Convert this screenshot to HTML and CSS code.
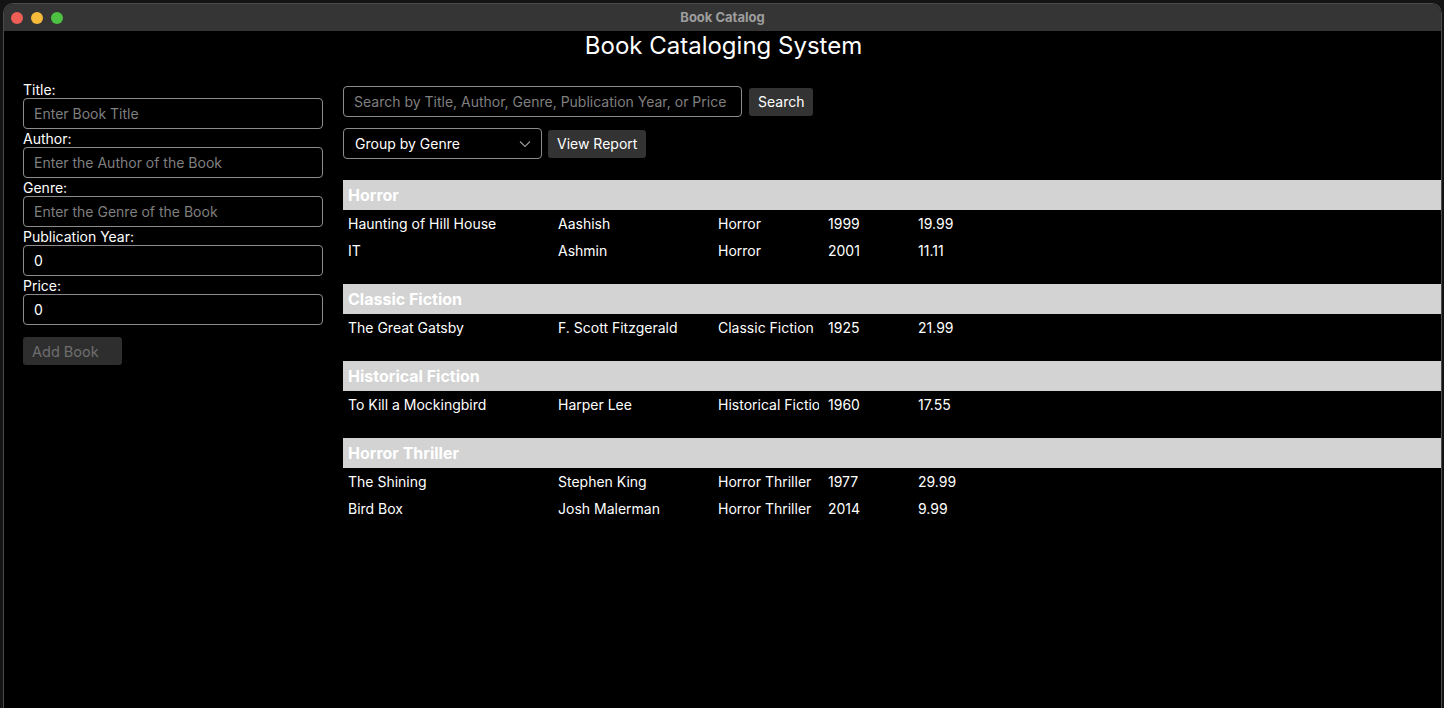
FILE: index.html
```html
<!DOCTYPE html>
<html lang="en">
<head>
<meta charset="utf-8">
<title>Book Catalog</title>
<link rel="stylesheet" href="styles.css">
</head>
<body>
<div class="window">
  <div class="titlebar">
    <div class="lights">
      <span class="light red"></span>
      <span class="light yellow"></span>
      <span class="light green"></span>
    </div>
    <div class="wintitle">Book Catalog</div>
  </div>
  <div class="content">
    <h1 class="apptitle">Book Cataloging System</h1>
    <div class="main">
      <div class="form">
        <label class="lbl">Title:</label>
        <input class="field" type="text" placeholder="Enter Book Title">
        <label class="lbl">Author:</label>
        <input class="field" type="text" placeholder="Enter the Author of the Book">
        <label class="lbl">Genre:</label>
        <input class="field" type="text" placeholder="Enter the Genre of the Book">
        <label class="lbl">Publication Year:</label>
        <input class="field" type="text" value="0">
        <label class="lbl">Price:</label>
        <input class="field" type="text" value="0">
        <button class="btn disabled" type="button">Add Book</button>
      </div>
      <div class="catalog">
        <div class="toolbar">
          <input class="search" type="text" placeholder="Search by Title, Author, Genre, Publication Year, or Price">
          <button class="btn" type="button">Search</button>
        </div>
        <div class="toolbar second">
          <div class="select">
            <span>Group by Genre</span>
            <svg class="chev" width="12" height="8" viewBox="0 0 12 8"><path d="M1 1.5 L6 6.5 L11 1.5" fill="none" stroke="#9a9a9a" stroke-width="1.1"/></svg>
          </div>
          <button class="btn" type="button">View Report</button>
        </div>
        <div class="groups">
          <section class="group">
            <div class="ghead">Horror</div>
            <div class="row"><span class="c1">Haunting of Hill House</span><span class="c2">Aashish</span><span class="c3">Horror</span><span class="c4">1999</span><span class="c5">19.99</span></div>
            <div class="row"><span class="c1">IT</span><span class="c2">Ashmin</span><span class="c3">Horror</span><span class="c4">2001</span><span class="c5">11.11</span></div>
          </section>
          <section class="group">
            <div class="ghead">Classic Fiction</div>
            <div class="row"><span class="c1">The Great Gatsby</span><span class="c2">F. Scott Fitzgerald</span><span class="c3">Classic Fiction</span><span class="c4">1925</span><span class="c5">21.99</span></div>
          </section>
          <section class="group">
            <div class="ghead">Historical Fiction</div>
            <div class="row"><span class="c1">To Kill a Mockingbird</span><span class="c2">Harper Lee</span><span class="c3">Historical Fiction</span><span class="c4">1960</span><span class="c5">17.55</span></div>
          </section>
          <section class="group">
            <div class="ghead">Horror Thriller</div>
            <div class="row"><span class="c1">The Shining</span><span class="c2">Stephen King</span><span class="c3">Horror Thriller</span><span class="c4">1977</span><span class="c5">29.99</span></div>
            <div class="row"><span class="c1">Bird Box</span><span class="c2">Josh Malerman</span><span class="c3">Horror Thriller</span><span class="c4">2014</span><span class="c5">9.99</span></div>
          </section>
        </div>
      </div>
    </div>
  </div>
</div>
</body>
</html>
```
FILE: styles.css
```css
* { box-sizing: border-box; }
html, body {
  margin: 0;
  height: 100%;
}
body {
  background: #141414;
  font-family: Inter, "Noto Sans", sans-serif;
  color: #fff;
  padding: 3px 2px 0 3px;
  overflow: hidden;
}
.window {
  height: 705px;
  background: #000;
  border: 1px solid #4a4a4a;
  border-bottom: none;
  border-radius: 10px 10px 0 0;
  overflow: hidden;
  display: flex;
  flex-direction: column;
}
.titlebar {
  height: 27px;
  flex: none;
  background: #353535;
  display: flex;
  align-items: center;
  position: relative;
}
.lights {
  display: flex;
  gap: 8px;
  padding-left: 7px;
}
.light {
  width: 12px;
  height: 12px;
  border-radius: 50%;
  display: block;
}
.red { background: #ee5d56; }
.yellow { background: #f6bb3a; }
.green { background: #4dc141; }
.wintitle {
  position: absolute;
  left: 0;
  right: 0;
  top: 0;
  line-height: 27px;
  text-align: center;
  font-size: 13px;
  font-weight: 700;
  color: #9e9e9e;
}
.content {
  flex: 1;
  display: flex;
  flex-direction: column;
}
.apptitle {
  margin: 0;
  height: 30px;
  font-size: 24px;
  line-height: 30px;
  font-weight: 400;
  text-align: center;
  padding-left: 2px;
}
.main {
  display: flex;
  padding-left: 19px;
  gap: 20px;
}
.form {
  width: 300px;
  flex: none;
  display: flex;
  flex-direction: column;
  align-items: flex-start;
  padding-top: 19px;
}
.lbl {
  font-size: 14px;
  line-height: 18px;
  height: 18px;
  padding-top: 1px;
  display: block;
}
.field {
  width: 300px;
  height: 31px;
  background: #000;
  border: 1px solid #8c8c8c;
  border-radius: 4px;
  color: #fff;
  font-family: inherit;
  font-size: 14px;
  padding: 0 10px;
  outline: none;
}
.field::placeholder, .search::placeholder {
  color: #7f7f7f;
}
.btn {
  height: 28px;
  background: #333;
  border: none;
  border-radius: 3px;
  color: #fff;
  font-family: inherit;
  font-size: 14px;
  padding: 0 9px;
}
.btn.disabled {
  margin-top: 12px;
  width: 99px;
  text-align: left;
  color: #6e6e6e;
  background: #2e2e2e;
  padding: 0 9px;
  font-size: 14.5px;
}
.catalog {
  flex: 1;
  display: flex;
  flex-direction: column;
  padding-top: 25px;
}
.toolbar {
  display: flex;
  align-items: center;
  gap: 7px;
}
.toolbar.second {
  margin-top: 11px;
  gap: 6px;
}
.search {
  width: 399px;
  height: 31px;
  background: #000;
  border: 1px solid #8c8c8c;
  border-radius: 4px;
  color: #fff;
  font-family: inherit;
  font-size: 14px;
  padding: 0 10px;
  outline: none;
}
.select {
  width: 199px;
  height: 31px;
  border: 1px solid #8c8c8c;
  border-radius: 4px;
  display: flex;
  align-items: center;
  justify-content: space-between;
  padding: 0 10px 0 11px;
  font-size: 14px;
}
.chev { display: block; }
.groups {
  margin-top: 21px;
  display: flex;
  flex-direction: column;
  gap: 20px;
}
.ghead {
  height: 30px;
  background: #d3d3d3;
  color: #fff;
  font-weight: 700;
  font-size: 16px;
  line-height: 30px;
  padding-left: 5px;
}
.row {
  height: 27px;
  display: flex;
  align-items: center;
  font-size: 14px;
  padding-left: 5px;
}
.row span {
  white-space: nowrap;
  overflow: hidden;
}
.c1 { width: 210px; }
.c2 { width: 160px; }
.c3 { width: 101px; margin-right: 9px; }
.c4 { width: 90px; }
.c5 { width: 90px; }
```
